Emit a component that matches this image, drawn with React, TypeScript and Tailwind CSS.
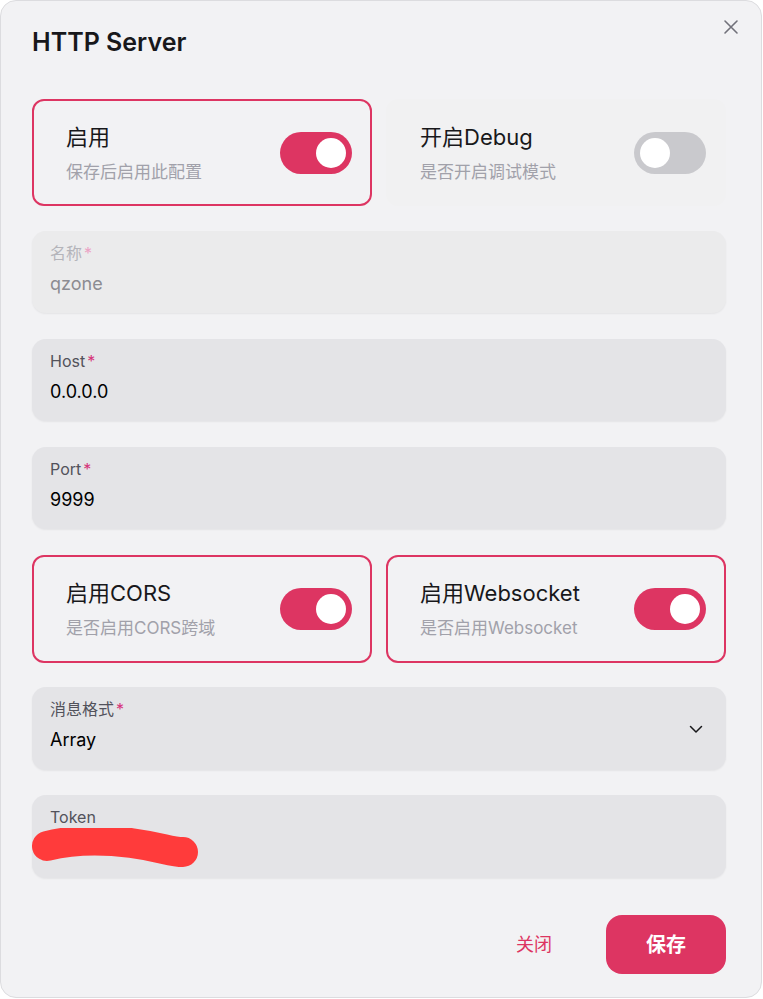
import type { ReactNode } from "react";

const PINK = "bg-[#dd3562]";

function Switch({ on }: { on: boolean }) {
  return (
    <div
      className={`flex h-[42px] w-[72px] shrink-0 items-center rounded-full px-[6px] ${
        on ? `${PINK} justify-end` : "bg-[#c9c9cd] justify-start"
      }`}
    >
      <div className="h-[30px] w-[30px] rounded-full bg-white" />
    </div>
  );
}

function SwitchCard({ title, desc, on }: { title: string; desc: string; on: boolean }) {
  return (
    <div
      className={`flex flex-1 items-center justify-between rounded-xl border-2 pl-[32px] pr-[18px] ${
        on ? "border-[#dd3562]" : "border-transparent bg-[#f1f1f2]"
      }`}
    >
      <div className="flex flex-col gap-[10px]">
        <span className="text-[22px] leading-[28px] text-[#18181b]">{title}</span>
        <span className="text-[17px] leading-[22px] text-[#a1a1aa]">{desc}</span>
      </div>
      <Switch on={on} />
    </div>
  );
}

function Field({
  label,
  required,
  disabled,
  children,
  right,
  className = "",
}: {
  label: string;
  required?: boolean;
  disabled?: boolean;
  children: ReactNode;
  right?: ReactNode;
  className?: string;
}) {
  return (
    <div
      className={`relative flex items-center rounded-[14px] pl-[18px] pr-[22px] shadow-[0_1px_2px_rgba(0,0,0,0.06)] ${
        disabled ? "bg-[#ebebec]" : "bg-[#e4e4e7]"
      } ${className}`}
    >
      <div className="flex flex-1 flex-col gap-[9px] self-start pt-[12px]">
        <span className={`text-[16px] leading-[20px] ${disabled ? "text-[#b4b4ba]" : "text-[#52525b]"}`}>
          {label}
          {required && (
            <span className={`ml-[2px] ${disabled ? "text-[#eba3c5]" : "text-[#d6337a]"}`}>*</span>
          )}
        </span>
        <div className={`text-[18px] leading-[24px] ${disabled ? "text-[#8c8c92]" : "text-black"}`}>
          {children}
        </div>
      </div>
      {right}
    </div>
  );
}

export default function App() {
  return (
    <div className="h-[999px] w-[763px] bg-white font-['Inter','Noto_Sans_CJK_SC',sans-serif]">
      <div className="relative flex h-[998px] w-[762px] flex-col rounded-2xl border border-[#dcdcdf] bg-[#f2f2f4] pl-[31px] pr-[35px]">
        <button className="absolute right-[22px] top-[18px] text-[#71717a]">
          <svg width="16" height="16" viewBox="0 0 16 16" fill="none" stroke="currentColor" strokeWidth="1.6" strokeLinecap="round">
            <path d="M2 2 L14 14 M14 2 L2 14" />
          </svg>
        </button>

        <h2 className="pt-[27px] text-[25px] font-semibold leading-[28px] text-[#18181b]">HTTP Server</h2>

        <div className="mt-[43px] flex flex-col">
          <div className="flex h-[107px] gap-[14px]">
            <SwitchCard title="启用" desc="保存后启用此配置" on />
            <SwitchCard title="开启Debug" desc="是否开启调试模式" on={false} />
          </div>

          <Field label="名称" required disabled className="mt-[25px] h-[82px]">
            qzone
          </Field>
          <Field label="Host" required className="mt-[26px] h-[82px]">
            0.0.0.0
          </Field>
          <Field label="Port" required className="mt-[26px] h-[82px]">
            9999
          </Field>

          <div className="mt-[26px] flex h-[108px] gap-[14px]">
            <SwitchCard title="启用CORS" desc="是否启用CORS跨域" on />
            <SwitchCard title="启用Websocket" desc="是否启用Websocket" on />
          </div>

          <Field
            label="消息格式"
            required
            className="mt-[24px] h-[83px]"
            right={
              <svg width="16" height="16" viewBox="0 0 16 16" fill="none" stroke="#18181b" strokeWidth="1.5" strokeLinecap="round" strokeLinejoin="round">
                <path d="M2.5 5.5 L8 11 L13.5 5.5" />
              </svg>
            }
          >
            Array
          </Field>

          <Field label="Token" className="mt-[25px] h-[83px]">
            <span className="relative block h-[24px]">
              <span className="pl-[6px] text-[#18181b]">,</span>
              <svg className="absolute left-[-19px] top-[-8px]" width="170" height="42" viewBox="0 0 170 42" fill="none">
                <path
                  d="M16 18 C 40 12, 70 11, 100 15 S 140 24, 152 24"
                  stroke="#ff3b3b"
                  strokeWidth="30"
                  strokeLinecap="round"
                />
              </svg>
            </span>
          </Field>
        </div>

        <div className="mt-[37px] flex items-center justify-end gap-[30px]">
          <button className="flex h-[59px] w-[84px] items-center justify-center text-[18px] text-[#dd3562]">关闭</button>
          <button className={`flex h-[59px] w-[120px] items-center justify-center rounded-[16px] ${PINK} text-[20px] font-semibold text-white`}>
            保存
          </button>
        </div>
      </div>
    </div>
  );
}
